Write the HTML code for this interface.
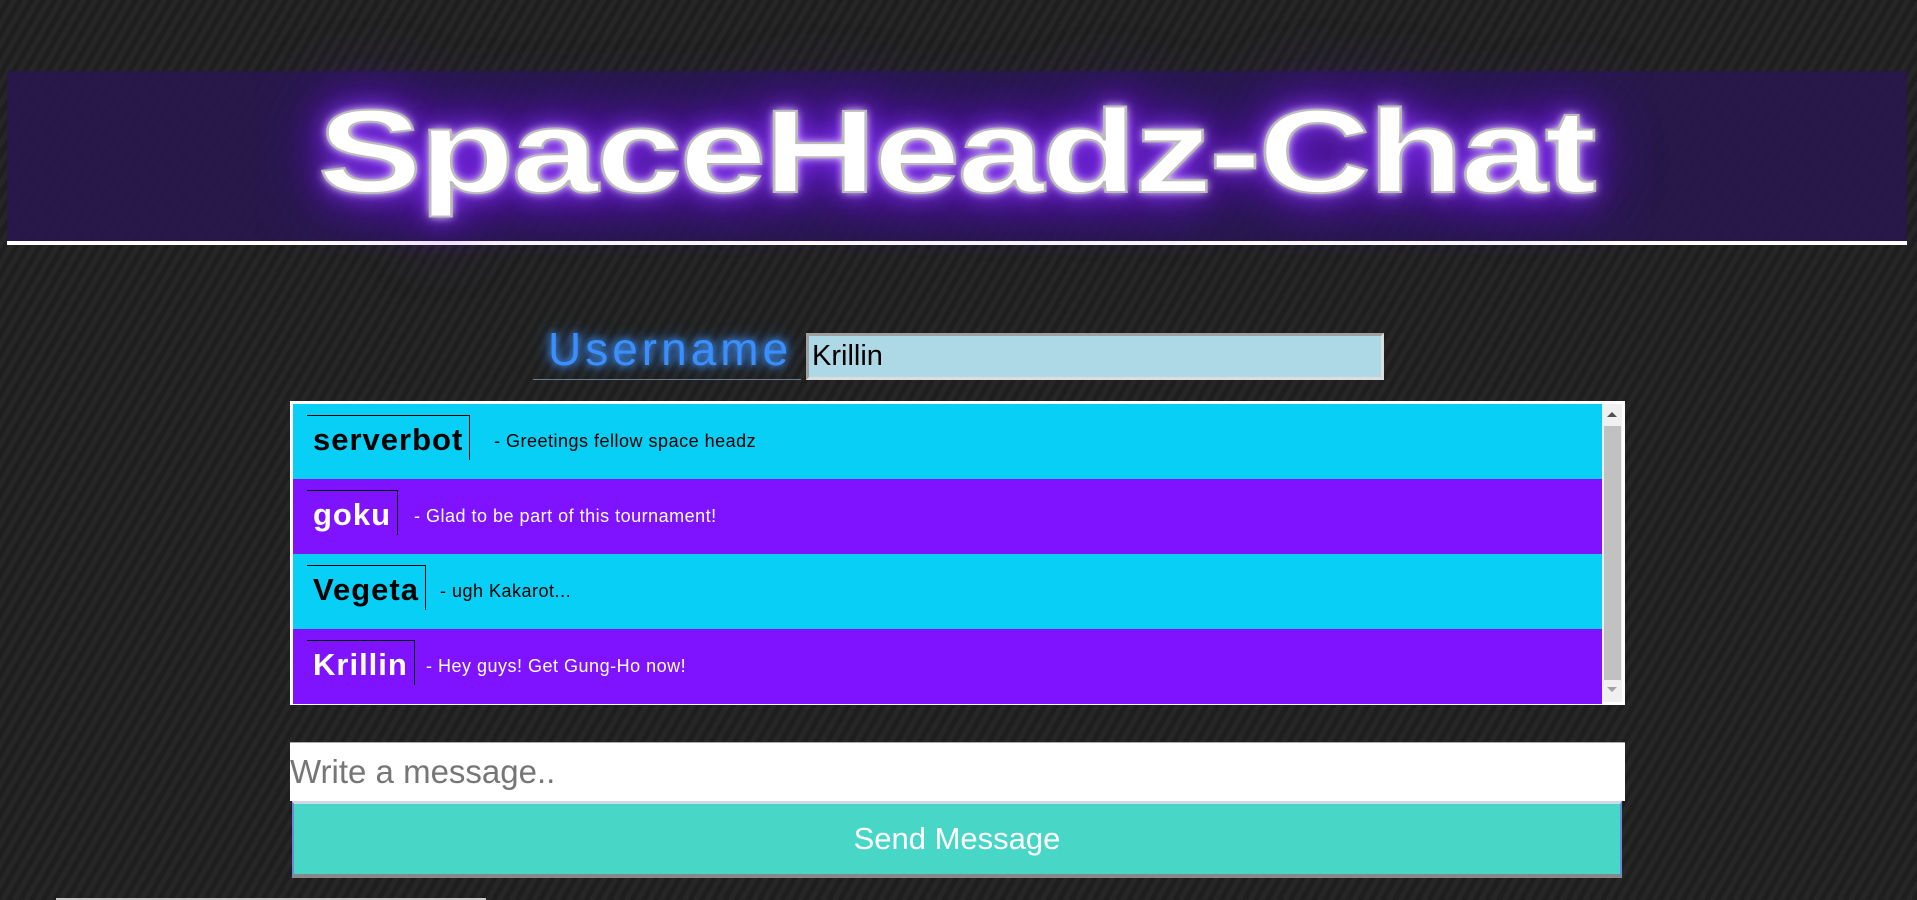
<!DOCTYPE html>
<html><head><meta charset="utf-8"><style>
html,body{margin:0;padding:0}
body{width:1917px;height:900px;overflow:hidden;position:relative;font-family:"Liberation Sans",sans-serif;
background:#232323 repeating-linear-gradient(120deg,#262626 0 5px,#1e1e1e 5px 10px);}
.hdr{position:absolute;left:7px;top:71px;width:1900px;height:170px;background:rgba(40,22,80,0.85);}
.line{position:absolute;left:7px;top:241px;width:1900px;height:4px;background:#fff;}
.title{position:absolute;left:318px;top:92px;font-size:118px;font-weight:bold;color:#fff;letter-spacing:-2px;
transform:scaleX(1.32);transform-origin:left;
text-shadow:0 0 8px #fff,0 0 20px #9040ff,0 0 40px #8020ff,0 0 70px #7010ff;-webkit-text-stroke:2px #bbb;line-height:120px;white-space:nowrap}
.ulab{position:absolute;left:548px;top:322px;font-size:46px;color:#3a8fff;text-shadow:0 0 8px #4aa0ff,0 0 16px #3080ff;letter-spacing:4px}
.uline{position:absolute;left:533px;top:379px;width:268px;height:1px;background:#6d7d90}
.uin{position:absolute;left:806px;top:333px;width:569px;height:41px;background:#add8e6;border:3px solid #a0a0a0;border-right-color:#ddd;border-bottom-color:#ddd;font-size:29px;line-height:41px;padding-left:3px;box-sizing:content-box}
.box{position:absolute;left:290px;top:401px;width:1329px;height:298px;border:3px solid #fff;background:#fff}
.row{position:absolute;left:0;width:1309px;height:75px}
.c{background:#08cff5;color:#000}.p{background:#8013ff;color:#fff}
.nm{position:absolute;left:14px;top:11px;height:44px;border-top:1px solid #000;border-right:1px solid #000;padding:0 6px 0 6px;font-size:31px;font-weight:bold;line-height:48px;letter-spacing:1px}
.msg{font-size:18px;position:absolute;top:27px;letter-spacing:0.5px}
.sb{position:absolute;left:1309px;top:0;width:20px;height:298px;background:#f0f0f0}
.thumb{position:absolute;left:2px;top:22px;width:17px;height:254px;background:#c1c1c1}
.min{position:absolute;left:290px;top:742px;width:1335px;height:58px;background:#fff;border-top:1px solid #aaa;font-size:33px;color:#767676;line-height:58px}
.btn{position:absolute;left:292px;top:801px;width:1326px;height:70px;background:#48d6c6;border:2px solid #6a8ad8;border-top:3px solid #cfd8e8;border-bottom:4px solid #888;color:#fff;font-size:31px;text-align:center;line-height:70px}
.bot{position:absolute;left:56px;top:898px;width:430px;height:2px;background:#ccc}
</style></head><body>
<div class="hdr"></div>
<div class="line"></div>
<div class="title">SpaceHeadz-Chat</div>
<div class="ulab">Username</div>
<div class="uline"></div>
<div class="uin">Krillin</div>
<div class="box">
 <div class="row c" style="top:0"><div class="nm">serverbot</div><div class="msg" style="left:201px">- Greetings fellow space headz</div></div>
 <div class="row p" style="top:75px"><div class="nm">goku</div><div class="msg" style="left:121px">- Glad to be part of this tournament!</div></div>
 <div class="row c" style="top:150px"><div class="nm">Vegeta</div><div class="msg" style="left:147px">- ugh Kakarot...</div></div>
 <div class="row p" style="top:225px"><div class="nm">Krillin</div><div class="msg" style="left:133px">- Hey guys! Get Gung-Ho now!</div></div>
 <div class="sb"><div class="thumb"></div>
  <div style="position:absolute;left:5px;top:8px;width:0;height:0;border-left:5px solid transparent;border-right:5px solid transparent;border-bottom:5px solid #505050"></div>
  <div style="position:absolute;left:5px;top:283px;width:0;height:0;border-left:5px solid transparent;border-right:5px solid transparent;border-top:5px solid #a0a0a0"></div>
 </div>
</div>
<div class="min">Write a message..</div>
<div class="btn">Send Message</div>
<div class="bot"></div>
</body></html>
